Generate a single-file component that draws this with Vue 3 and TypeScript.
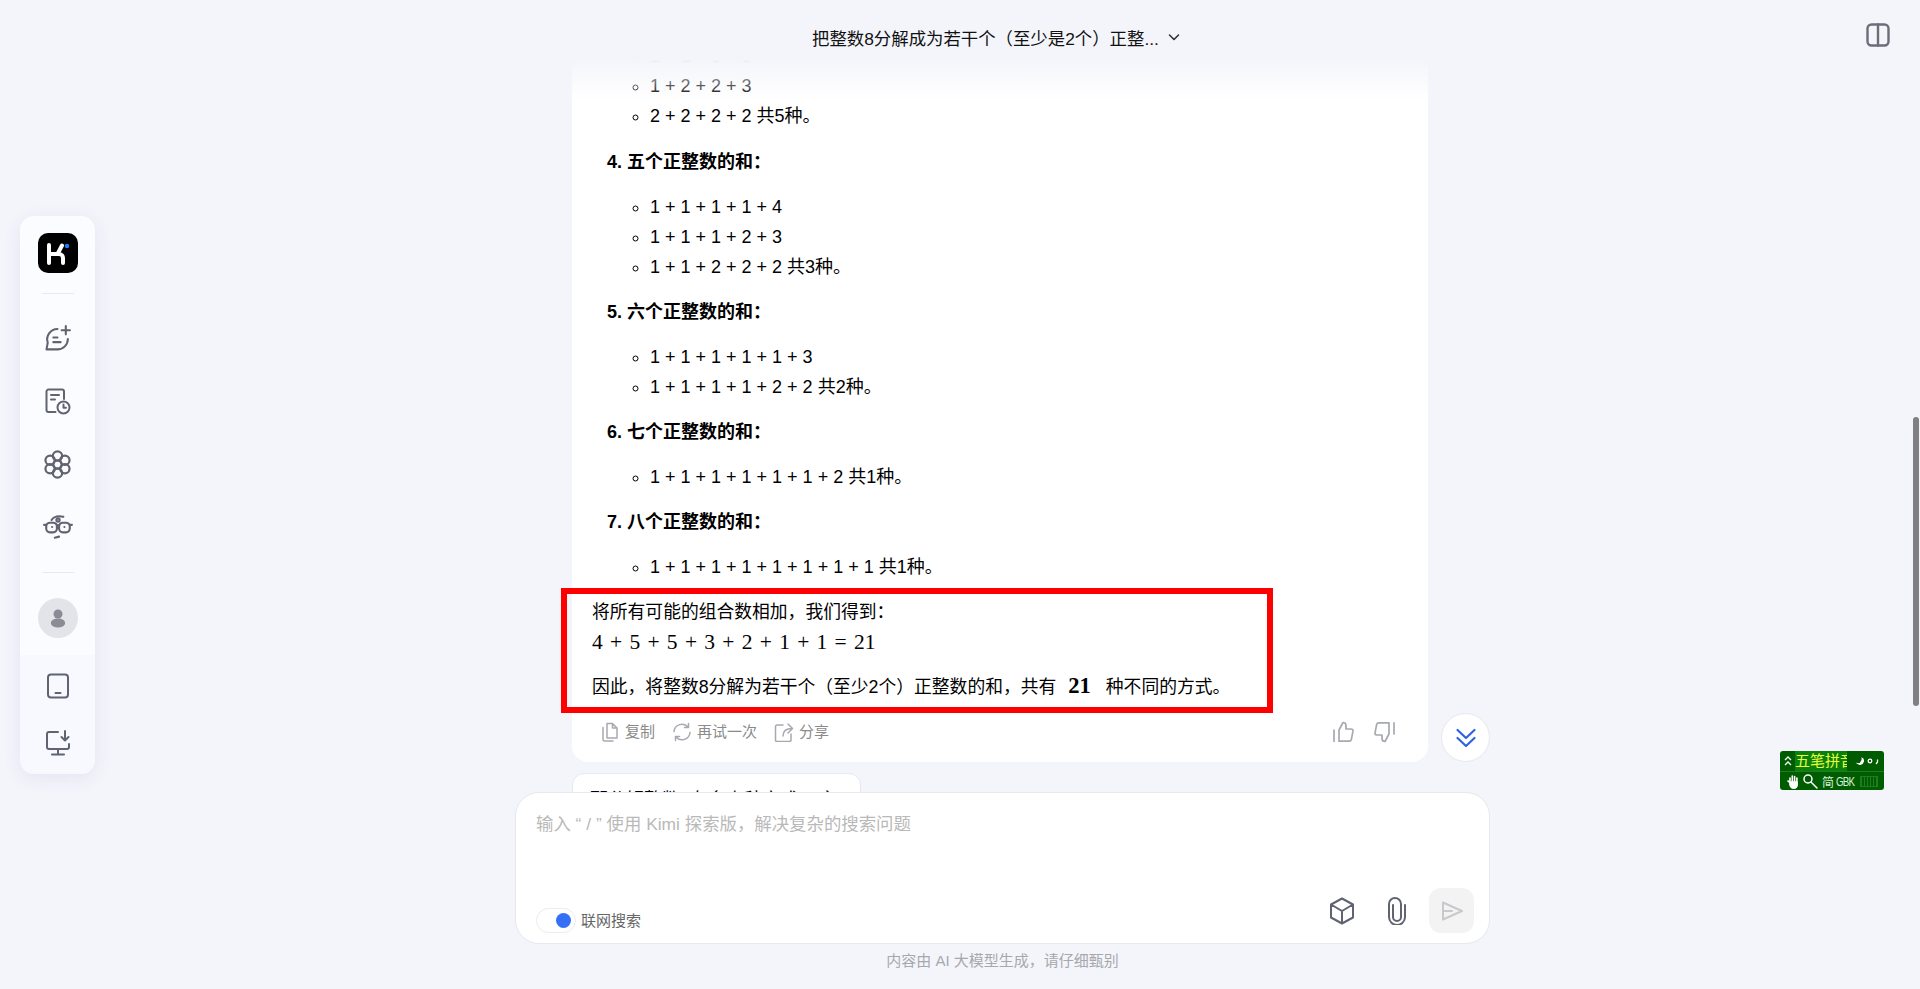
<script setup lang="ts">
interface Section {
  title: string
  items: string[]
}

const firstItems: string[] = ['1 + 1 + 3 + 3', '1 + 2 + 2 + 3', '2 + 2 + 2 + 2 共5种。']

const sections: Section[] = [
  { title: '4. 五个正整数的和：', items: ['1 + 1 + 1 + 1 + 4', '1 + 1 + 1 + 2 + 3', '1 + 1 + 2 + 2 + 2 共3种。'] },
  { title: '5. 六个正整数的和：', items: ['1 + 1 + 1 + 1 + 1 + 3', '1 + 1 + 1 + 1 + 2 + 2 共2种。'] },
  { title: '6. 七个正整数的和：', items: ['1 + 1 + 1 + 1 + 1 + 1 + 2 共1种。'] },
  { title: '7. 八个正整数的和：', items: ['1 + 1 + 1 + 1 + 1 + 1 + 1 + 1 共1种。'] },
]

const petals: [number, number][] = [
  [13, 5.4],
  [19.6, 9.2],
  [19.6, 16.8],
  [13, 20.6],
  [6.4, 16.8],
  [6.4, 9.2],
]
</script>

<template>
  <div class="page">
    <aside class="rail">
      <div class="rail-top">
        <svg class="logo" width="40" height="40" viewBox="0 0 40 40">
          <rect width="40" height="40" rx="10" fill="#000" />
          <path d="M11 12v18M11 21h10a4 4 0 0 1 4 4v5M19.5 21l4.5-8.5" fill="none" stroke="#fff" stroke-width="4" />
          <circle cx="29" cy="13" r="2.2" fill="#1783ff" />
        </svg>
        <div class="rule"></div>
        <button class="rail-btn">
          <svg width="27" height="27" viewBox="0 0 26 26">
            <path d="M13 3.800A10 10 0 0 0 3.600 17l-1.200 6.500H13A10 10 0 0 0 23 13.500M9 12h4M9 16.500h7M21 1v8M17 5h8" />
          </svg>
        </button>
        <button class="rail-btn">
          <svg width="27" height="27" viewBox="0 0 27 27">
            <path d="M11.500 24H4.500a2 2 0 0 1-2-2V3.500a2 2 0 0 1 2-2H18a2 2 0 0 1 2 2V11M7 7h8M7 11.500h4" />
            <circle cx="19.500" cy="19.500" r="6" />
            <path d="M19.500 16.500v3.200h2.500" />
          </svg>
        </button>
        <button class="rail-btn">
          <svg width="29" height="29" viewBox="0 0 26 26">
            <circle v-for="(p, i) in petals" :key="i" :cx="p[0]" :cy="p[1]" r="4.200" />
            <circle cx="13" cy="13" r="3.800" />
          </svg>
        </button>
        <button class="rail-btn">
          <svg class="glasses" width="30" height="26" viewBox="0 0 28 24">
            <rect x="3" y="8" width="10" height="9" rx="3.500" />
            <rect x="15" y="8" width="10" height="9" rx="3.500" />
            <path d="M13 10.500h2M3 10H1M25 10h2M8 5.500C10 2 15 1.500 19 2.500M11 22l4-1" />
            <circle cx="14" cy="5.500" r="1.500" />
            <circle cx="8.500" cy="12" r="1" class="dot" />
            <circle cx="20" cy="12" r="1" class="dot" />
          </svg>
        </button>
        <div class="rule rule-low"></div>
        <div class="avatar">
          <svg width="40" height="40" viewBox="0 0 40 40">
            <circle cx="20" cy="16" r="4.500" fill="#898c95" />
            <ellipse cx="20" cy="25" rx="7.200" ry="4.600" fill="#898c95" />
          </svg>
        </div>
      </div>
      <div class="rail-bottom">
        <svg width="26" height="26" viewBox="0 0 26 26">
          <rect x="3" y="1.500" width="20" height="23" rx="3" />
          <path d="M10.500 20h5" />
        </svg>
        <svg width="26" height="26" viewBox="0 0 26 26">
          <path d="M13 2H4a2 2 0 0 0-2 2v13a2 2 0 0 0 2 2h18a2 2 0 0 0 2-2v-3M13 19v5M7 24.500h12M20 1v9M16.500 7l3.500 3.500L23.500 7" />
        </svg>
      </div>
    </aside>

    <main class="main">
      <header class="topbar">
        <div class="title">
          <span>把整数8分解成为若干个（至少是2个）正整...</span>
          <svg width="12" height="12" viewBox="0 0 12 12">
            <path d="M1.500 4l4.500 4.500L10.500 4" />
          </svg>
        </div>
        <svg class="panel" width="24" height="24" viewBox="0 0 24 24">
          <rect x="1.500" y="1.500" width="21" height="21" rx="4" />
          <path d="M12 1.500v21" />
        </svg>
      </header>

      <section class="chat">
        <article class="card">
          <ul class="sub-list">
            <li v-for="item in firstItems" :key="item">{{ item }}</li>
          </ul>
          <template v-for="s in sections" :key="s.title">
            <p class="heading">{{ s.title }}</p>
            <ul class="sub-list">
              <li v-for="item in s.items" :key="item">{{ item }}</li>
            </ul>
          </template>

          <div class="highlight">
            <p>将所有可能的组合数相加，我们得到：</p>
            <p class="math">4 + 5 + 5 + 3 + 2 + 1 + 1 = 21</p>
            <p class="conclusion">因此，将整数8分解为若干个（至少2个）正整数的和，共有<b class="math-bold">21</b>种不同的方式。</p>
          </div>

          <footer class="actions">
            <button class="act">
              <svg width="20" height="20" viewBox="0 0 20 20">
                <path d="M7 1.500h5.500L17 6v10H7zM12.500 1.500V6H17M3 5.500V17.500a1.500 1.500 0 0 0 1.500 1.500H13" />
              </svg>
              复制
            </button>
            <button class="act">
              <svg width="20" height="20" viewBox="0 0 20 20">
                <path d="M2 9.500A8 8 0 0 1 16 5M18 10.500A8 8 0 0 1 4 15M16.500 1.500V5.500H12.500M3.500 18.500V14.500H7.500" />
              </svg>
              再试一次
            </button>
            <button class="act">
              <svg width="20" height="20" viewBox="0 0 20 20">
                <path d="M9 3H3a1.500 1.500 0 0 0-1.500 1.500v13.500A1.500 1.500 0 0 0 3 19.500h12.500A1.500 1.500 0 0 0 17 18v-6M9 14c0-5 3.500-7.500 9-7.500M14 2l4.500 4.500L14 11" />
              </svg>
              分享
            </button>
            <div class="votes">
              <svg width="22" height="22" viewBox="0 0 22 22">
                <path d="M7 9l4-7.500c1.500 0 3 1 3 3V8h5c1.500 0 2.200 1 2 2.200l-1.700 8.500c-.2 1-1 1.500-2 1.500H7zM2 9v11.200" />
              </svg>
              <svg width="22" height="22" viewBox="0 0 22 22">
                <path transform="rotate(180 11 11)" d="M7 9l4-7.500c1.500 0 3 1 3 3V8h5c1.500 0 2.200 1 2 2.200l-1.700 8.500c-.2 1-1 1.500-2 1.500H7zM2 9v11.200" />
              </svg>
            </div>
          </footer>
        </article>

        <button class="chip">
          那分解整数8有多少种方式?
          <svg width="18" height="18" viewBox="0 0 18 18">
            <path d="M2 9h13M9 2l7 7-7 7" />
          </svg>
        </button>

        <button class="to-bottom">
          <svg width="22" height="22" viewBox="0 0 22 22">
            <path d="M2.500 3l8.500 8 8.500-8M2.500 11l8.500 8 8.500-8" />
          </svg>
        </button>
      </section>

      <section class="composer">
        <div class="placeholder">输入 “ / ” 使用 Kimi 探索版，解决复杂的搜索问题</div>
        <div class="composer-row">
          <div class="search">
            <span class="toggle"><i></i></span>
            <span class="search-label">联网搜索</span>
          </div>
          <div class="tools">
            <svg class="cube" width="26" height="28" viewBox="0 0 26 28">
              <path d="M13 1.500L24 7.500v13L13 26.500 2 20.500v-13zM2 7.500L13 14l11-6.500M13 14v12.500" />
            </svg>
            <svg class="clip" width="20" height="28" viewBox="0 0 20 28">
              <path d="M18 8v12a8 8 0 0 1-16 0V7a6 6 0 0 1 12 0v13a4 4 0 0 1-8 0V8" />
            </svg>
            <button class="send">
              <svg width="24" height="24" viewBox="0 0 24 24">
                <path d="M3 3.500L22 12 3 20.500zM3 12h9" />
              </svg>
            </button>
          </div>
        </div>
      </section>
      <p class="disclaimer">内容由 AI 大模型生成，请仔细甄别</p>
    </main>

    <div class="scrollbar"></div>

    <div class="ime">
      <div class="ime-top">
        <svg width="8" height="12" viewBox="0 0 8 12">
          <path d="M1 5l3-3 3 3M1 10l3-3 3 3" />
        </svg>
        <span class="ime-name"><span>五笔拼音</span></span>
        <span class="moon"></span>
        <svg class="ime-marks" width="14" height="8" viewBox="0 0 14 8">
          <circle cx="3" cy="4" r="1.800" />
          <path d="M10.500 2.500v2.500l-1.500 2" />
        </svg>
      </div>
      <div class="ime-bottom">
        <svg class="hand" width="13" height="15" viewBox="0 0 13 15">
          <path d="M3 9V4M5.300 8V2M7.600 8V2.500M9.900 9V4M3 8.500L1 7M3 9c0 3 1.500 5 4 5s3-1.500 3-5" />
          <path class="hand-palm" d="M3 8h7v2.500c0 2-1 3.500-3.300 3.500S3 12 3 8z" />
        </svg>
        <svg width="16" height="16" viewBox="0 0 16 16">
          <circle cx="6" cy="6" r="4" />
          <path d="M9 9l6 6" />
        </svg>
        <span class="ime-jian">简</span>
        <span class="ime-gbk">GBK</span>
        <span class="ime-keys"></span>
      </div>
    </div>
  </div>
</template>

<style>
html,
body {
  margin: 0;
  overflow: hidden;
}
</style>

<style scoped>
.page {
  position: relative;
  display: flex;
  width: 1920px;
  height: 989px;
  overflow: hidden;
  background: #f4f5fb;
  color: #000;
  font-family: "Liberation Sans", "Noto Sans CJK SC", sans-serif;
  font-size: 18px;
}
p,
ul {
  margin: 0;
}
button {
  padding: 0;
  border: 0;
  background: none;
  font: inherit;
}
svg {
  fill: none;
  stroke-linecap: round;
  stroke-linejoin: round;
}

/* rail */
.rail {
  flex: none;
  align-self: flex-start;
  display: flex;
  flex-direction: column;
  width: 75px;
  height: 558px;
  margin: 216px 0 0 20px;
  border-radius: 14px;
  overflow: hidden;
  background: #fbfcff;
  box-shadow: 0 4px 18px rgba(50, 70, 130, 0.09);
}
.rail-top {
  height: 439px;
  padding-top: 17px;
  display: flex;
  flex-direction: column;
  align-items: center;
  box-sizing: border-box;
}
.rail svg {
  stroke: #5f6470;
  stroke-width: 2;
  flex: none;
}
.rail .logo,
.rail .avatar svg {
  stroke: none;
}
.logo {
  display: block;
  margin-bottom: 20px;
}
.rule {
  width: 32px;
  height: 1px;
  background: #e8e9ee;
  margin-bottom: 24px;
}
.rule-low {
  margin-top: 2px;
  margin-bottom: 25px;
}
.rail-btn {
  display: flex;
  align-items: center;
  justify-content: center;
  width: 40px;
  height: 40px;
  margin-bottom: 23px;
}
.rail .dot {
  fill: #5f6470;
  stroke: none;
}
.avatar {
  width: 40px;
  height: 40px;
  border-radius: 50%;
  background: #e3e4e9;
}
.rail-bottom {
  flex: 1;
  display: flex;
  flex-direction: column;
  align-items: center;
  gap: 31px;
  padding-top: 18px;
  background: #f7f9fe;
}

/* main */
.main {
  position: relative;
  flex: 1;
  min-width: 0;
  display: flex;
  flex-direction: column;
}
.topbar {
  position: absolute;
  z-index: 2;
  top: 0;
  left: 0;
  right: 0;
  height: 100px;
  display: flex;
  justify-content: space-between;
  align-items: flex-start;
  padding: 22px 30px 0 717px;
  box-sizing: border-box;
  background: linear-gradient(#f4f5fb 60%, rgba(244, 245, 251, 0));
}
.title {
  display: flex;
  align-items: center;
  gap: 9px;
  height: 30px;
  font-size: 17.4px;
  color: #111;
}
.title svg {
  stroke: #333;
  stroke-width: 1.6;
}
.panel {
  stroke: #6a6e79;
  stroke-width: 2.400;
  margin-top: 1px;
}

.chat {
  position: relative;
  flex: none;
  height: 792px;
  overflow: hidden;
  padding-left: 477px;
  box-sizing: border-box;
}
.card {
  width: 856px;
  box-sizing: border-box;
  padding: 41px 0 11px;
  border-radius: 0 0 16px 16px;
  background: #fff;
  line-height: 30px;
}
.sub-list {
  padding-left: 78px;
  list-style: circle;
}
.heading {
  padding-left: 35px;
  margin: 15px 0;
  font-weight: 700;
}
.sub-list:first-child + .heading {
  margin-top: 16px;
}
.highlight {
  width: 712px;
  box-sizing: border-box;
  margin: 6px 0 0 -11px;
  padding: 3px 0 5px 25px;
  border: 6px solid #f00;
  font-size: 17.800px;
}
.math {
  font-family: "Liberation Serif", serif;
  font-size: 21.500px;
  word-spacing: 1.900px;
}
.conclusion {
  margin-top: 14px;
}
.math-bold {
  font-family: "Liberation Serif", serif;
  font-size: 22.500px;
  margin: 0 15px 0 12px;
}
.actions {
  display: flex;
  align-items: center;
  height: 38px;
  padding: 0 32px 0 28px;
}
.act {
  display: flex;
  align-items: center;
  gap: 5px;
  margin-right: 17px;
  font-size: 15px;
  color: #8a8a8a;
}
.act svg {
  stroke: #a6a9b0;
  stroke-width: 1.500;
}
.votes {
  display: flex;
  gap: 20px;
  margin-left: auto;
}
.votes svg {
  stroke: #a6a9b0;
  stroke-width: 1.700;
}
.chip {
  display: flex;
  align-items: center;
  gap: 10px;
  width: 289px;
  height: 50px;
  margin-top: 11px;
  padding-left: 17px;
  box-sizing: border-box;
  border: 1px solid #e6e8ee;
  border-radius: 12px;
  background: #fff;
  font-size: 18px;
  color: #000;
}
.chip svg {
  stroke: #222;
  stroke-width: 1.600;
}
.to-bottom {
  position: absolute;
  left: 1346px;
  top: 713px;
  display: flex;
  align-items: center;
  justify-content: center;
  width: 49px;
  height: 49px;
  box-sizing: border-box;
  border: 1px solid #e6e8ee;
  border-radius: 50%;
  background: #fff;
}
.to-bottom svg {
  stroke: #2f62e3;
  stroke-width: 2.200;
}

.composer {
  position: relative;
  width: 975px;
  height: 152px;
  margin-left: 420px;
  box-sizing: border-box;
  padding: 19px 15px 10px 20px;
  display: flex;
  flex-direction: column;
  justify-content: space-between;
  border: 1px solid #e6e8ee;
  border-radius: 24px;
  background: #fff;
}
.placeholder {
  line-height: 24px;
  font-size: 17.400px;
  color: #b9b9b9;
}
.composer-row {
  display: flex;
  justify-content: space-between;
  align-items: flex-end;
}
.search {
  display: flex;
  align-items: center;
  gap: 5px;
  font-size: 15px;
  color: #666;
}
.search-label {
  padding-bottom: 2px;
}
.toggle {
  display: flex;
  align-items: center;
  justify-content: flex-end;
  width: 40px;
  height: 25px;
  padding-right: 4px;
  box-sizing: border-box;
  border: 1px solid #ececec;
  border-radius: 13px;
  background: #fff;
}
.toggle i {
  width: 15px;
  height: 15px;
  border-radius: 50%;
  background: #3470f5;
}
.tools {
  display: flex;
  align-items: center;
}
.tools svg {
  stroke: #5f6470;
  stroke-width: 2;
}
.clip {
  margin: 0 22px 0 32px;
}
.send {
  display: flex;
  align-items: center;
  justify-content: center;
  width: 45px;
  height: 45px;
  border-radius: 12px;
  background: #f3f3f4;
}
.tools .send svg {
  stroke: #c8c9cc;
}
.disclaimer {
  width: 975px;
  margin-left: 420px;
  padding-top: 6px;
  line-height: 22px;
  text-align: center;
  font-size: 15px;
  color: #a6a8ad;
}

.scrollbar {
  position: absolute;
  top: 417px;
  right: 1px;
  width: 6px;
  height: 289px;
  border-radius: 3px;
  background: #808080;
}

/* IME status bar */
.ime {
  position: absolute;
  left: 1780px;
  top: 751px;
  width: 104px;
  height: 39px;
  border-radius: 3px;
  background: #005c00;
  color: #fff;
  overflow: hidden;
}
.ime-top {
  display: flex;
  align-items: center;
  height: 20px;
  padding-left: 4px;
  border-bottom: 1px solid #1f7d1f;
  box-sizing: content-box;
}
.ime-top svg {
  stroke: #fff;
  stroke-width: 1.300;
  stroke-linecap: butt;
  stroke-linejoin: miter;
}
.ime-name {
  width: 52px;
  height: 20px;
  margin-left: 3px;
  overflow: hidden;
  white-space: nowrap;
  background: #0c800c;
  color: #e6ff3c;
  font-size: 15px;
  line-height: 20px;
}
.moon {
  width: 8px;
  height: 8px;
  margin-left: 9px;
  border-radius: 50%;
  box-shadow: inset -3px -1px 0 0 #fff;
  transform: rotate(20deg);
}
.ime-top .ime-marks {
  margin-left: 3px;
}
.ime-bottom {
  display: flex;
  align-items: center;
  height: 18px;
  padding-left: 7px;
}
.ime-bottom svg {
  margin-left: 2px;
  stroke: #fff;
  stroke-width: 1.500;
}
.ime-bottom .hand {
  margin-left: 0;
  stroke-width: 1.600;
}
.hand-palm {
  fill: #fff;
}
.ime-jian {
  margin-left: 4px;
  font-size: 12px;
  color: #d9f0d9;
}
.ime-gbk {
  margin-left: 2px;
  font-size: 13px;
  letter-spacing: -1px;
  color: #d9f0d9;
  transform: scaleX(0.75);
  transform-origin: left center;
}
.ime-keys {
  width: 18px;
  height: 11px;
  margin-left: 0;
  border: 1px solid #1f7d1f;
  box-sizing: border-box;
  background: repeating-linear-gradient(90deg, #1f7d1f 0 1px, transparent 1px 3px);
}
</style>
